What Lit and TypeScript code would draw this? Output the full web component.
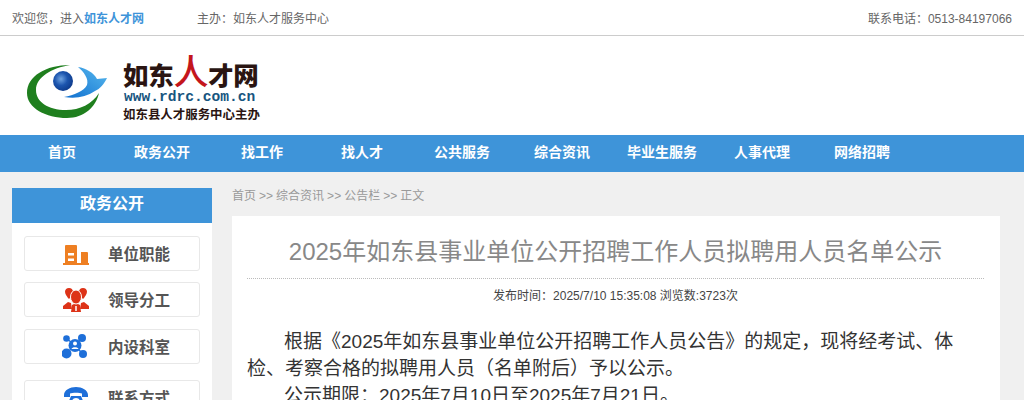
import { LitElement, html, css, svg } from "lit";
import { customElement } from "lit/decorators.js";

const nav = ["首页", "政务公开", "找工作", "找人才", "公共服务", "综合资讯", "毕业生服务", "人事代理", "网络招聘"];

const icons = {
  building: svg`<svg width="26" height="23" viewBox="0 -3 26 23"><path fill="#ee7f22" d="M2 1a1 1 0 0 1 1-1h10a1 1 0 0 1 1 1v18H2z"/><path fill="#ee7f22" d="M18 7h6a1 1 0 0 1 1 1v11h-7z"/><rect x="0" y="18" width="26" height="2" fill="#ee7f22"/><rect x="5" y="8" width="6" height="2.500" fill="#fff"/><rect x="5" y="13.500" width="6" height="2.500" fill="#fff"/></svg>`,
  people: svg`<svg width="26" height="24" viewBox="0 0 26 24"><g fill="#dd3318"><path d="M6 0c2.400 0 4 1.700 4 3.700 0 2.800-2.500 4.800-3.200 6.800h-1.600C4.500 8.500 2 6.500 2 3.700 2 1.700 3.600 0 6 0z"/><path d="M20 0c2.400 0 4 1.700 4 3.700 0 2.800-2.500 4.800-3.200 6.800h-1.600C18.500 8.500 16 6.500 16 3.700 16 1.700 17.600 0 20 0z"/><path d="M0 18l5-4 3 1 1 6H0z"/><path d="M26 18l-5-4-3 1-1 6h9z"/><path d="M8 24l1-7 4-2 4 2 1 7z"/></g><ellipse cx="13" cy="9" rx="5.500" ry="7" fill="#dd3318" stroke="#fff" stroke-width="1"/><path d="M13 18v5" stroke="#fff" stroke-width="1.500"/></svg>`,
  net: svg`<svg width="28" height="25" viewBox="0 0 28 25"><g stroke="#1e6fd9" stroke-width="1.500"><path d="M5 5l8 6M20 4l-7 7M4 19l9-7M21 20l-8-8"/></g><g fill="#1e6fd9"><circle cx="4.500" cy="4.500" r="3.300"/><circle cx="20" cy="4" r="4"/><circle cx="4.500" cy="19.500" r="5"/><circle cx="21" cy="20" r="4"/><circle cx="13" cy="11.500" r="6.500"/></g><circle cx="13" cy="9.500" r="2" fill="#fff"/><path d="M9.500 15c.5-2.500 6.500-2.500 7 0z" fill="#fff"/></svg>`,
  phone: svg`<svg width="24" height="26" viewBox="0 -2 24 26"><path fill="#1e6fd9" d="M0 8C0 3 6 0 12 0s12 3 12 8v2h-6V6.500C16 5.500 8 5.500 6 6.500V10H0z"/><path fill="#1e6fd9" d="M7 9h10l5 12v3H2v-3z"/><circle cx="12" cy="15" r="4" fill="#fff"/><circle cx="12" cy="15" r="2" fill="#1e6fd9"/></svg>`,
};

const side = [
  { t: "单位职能", i: icons.building, c: "" },
  { t: "领导分工", i: icons.people, c: "" },
  { t: "内设科室", i: icons.net, c: "wide" },
  { t: "联系方式", i: icons.phone, c: "" },
];

@customElement("app-root")
export class AppRoot extends LitElement {
  static styles = css`
    :host { display: block; height: 400px; overflow: hidden; background: #f0f0f0; font-family: "Liberation Sans", "Noto Sans CJK SC", sans-serif; }
    .top { height: 35px; background: #fff; border-bottom: 1px solid #ccc; display: flex; align-items: center; padding: 0 12px; font-size: 12px; color: #666; }
    .top b { color: #3e94d9; }
    .host { margin-left: 53px; }
    .phone { margin-left: auto; }
    .brand { height: 99px; background: #fff; display: flex; align-items: flex-start; padding-left: 26px; }
    .mark { display: block; margin-right: 15px; margin-top: 28px; }
    .words { display: flex; flex-direction: column; width: 140px; margin-top: 22px; }
    .name { font-size: 25.500px; line-height: 27px; font-weight: 900; color: #2a1512; height: 32px; display: flex; align-items: flex-end; white-space: nowrap; letter-spacing: -0.300px; }
    .name i { font-style: normal; font-size: 35px; line-height: 34px; font-weight: 500; color: #c4161c; }
    .url { font-family: "Liberation Mono", monospace; font-size: 14.600px; line-height: 15px; font-weight: 700; color: #17557f; white-space: nowrap; padding-left: 1px; }
    .sub { font-size: 12.450px; line-height: 20px; font-weight: 700; color: #2a1512; white-space: nowrap; }
    nav { height: 37px; background: #3e94d9; display: flex; padding: 0 12px; }
    nav a { width: 100px; text-align: center; line-height: 35px; font-size: 14px; font-weight: 700; color: #fff; }
    .body { display: flex; gap: 20px; padding: 16px 24px 0 12px; }
    aside { width: 200px; flex: none; background: #fff; }
    aside h3 { margin: 0; height: 35px; line-height: 31px; background: #3e94d9; color: #fff; font-size: 16px; font-weight: 700; text-align: center; }
    .list { display: flex; flex-direction: column; padding: 13px 12px; gap: 11px; }
    .item { height: 35px; box-sizing: border-box; border: 1px solid #e8e8e8; border-radius: 3px; display: flex; align-items: center; font-size: 15.500px; font-weight: 700; color: #555; flex: none; }
    .item.wide { margin-bottom: 5px; margin-top: 1px; }
    .ic { width: 83px; display: flex; justify-content: center; padding-left: 19px; box-sizing: border-box; }
    .lb { margin-top: -2px; }
    main { flex: 1; min-width: 0; }
    .crumb { height: 28px; padding-top: 1px; box-sizing: border-box; font-size: 12px; line-height: 14px; color: #999; word-spacing: -0.300px; }
    .card { background: #fff; padding: 0 16px 0 15px; height: 300px; }
    h1 { margin: 0; height: 63px; box-sizing: border-box; border-bottom: 1px dotted #bbb; font-size: 24px; font-weight: 400; line-height: 72px; color: #888; text-align: center; white-space: nowrap; }
    .meta { font-size: 12px; line-height: 16px; color: #444; text-align: center; padding-top: 9px; height: 40px; }
    .text { font-size: 19px; line-height: 27px; color: #333; }
    .text p { margin: 0; text-indent: 37px; }
  `;

  render() {
    return html`
      <div class="top">
        <span>欢迎您，进入<b>如东人才网</b></span>
        <span class="host">主办：如东人才服务中心</span>
        <span class="phone">联系电话：0513-84197066</span>
      </div>
      <div class="brand">
        <svg class="mark" width="82" height="56" viewBox="0 0 82 56">
          <defs>
            <radialGradient id="g" cx="0.400" cy="0.400" r="0.650"><stop offset="0" stop-color="#6fa3e0"/><stop offset="0.500" stop-color="#1c55ae"/><stop offset="1" stop-color="#0d3a8a"/></radialGradient>
            <linearGradient id="b" x1="0" y1="1" x2="1" y2="0"><stop offset="0" stop-color="#0f6fcf"/><stop offset="1" stop-color="#58b9ee"/></linearGradient>
          </defs>
          <path fill="#1f7f1e" d="M44 1C20 1 1 12 1 29c0 15 19 25 40 25 17 0 29-11 32-25-7 11-19 17-33 17C22 46 10 38 10 26 10 13 26 4 44 1z"/>
          <circle cx="37" cy="17" r="10" fill="url(#g)"/>
          <path fill="url(#b)" d="M52 3c8 1 16 6 19 12 3 0 7-1 10-1-3 6-7 11-12 13-9 6-19 8-31 6 10-2 20-6 23-12 2-6-3-13-9-18z"/>
        </svg>
        <div class="words">
          <div class="name">如东<i>人</i>才网</div>
          <div class="url">www.rdrc.com.cn</div>
          <div class="sub">如东县人才服务中心主办</div>
        </div>
      </div>
      <nav>${nav.map((n) => html`<a>${n}</a>`)}</nav>
      <div class="body">
        <aside>
          <h3>政务公开</h3>
          <div class="list">
            ${side.map((s) => html`<div class="item ${s.c}"><span class="ic">${s.i}</span><span class="lb">${s.t}</span></div>`)}
          </div>
        </aside>
        <main>
          <div class="crumb">首页 &gt;&gt; 综合资讯 &gt;&gt; 公告栏 &gt;&gt; 正文</div>
          <div class="card">
            <h1>2025年如东县事业单位公开招聘工作人员拟聘用人员名单公示</h1>
            <div class="meta">发布时间：2025/7/10 15:35:08 浏览数:3723次</div>
            <div class="text">
              <p>根据《2025年如东县事业单位公开招聘工作人员公告》的规定，现将经考试、体检、考察合格的拟聘用人员（名单附后）予以公示。</p>
              <p>公示期限：2025年7月10日至2025年7月21日。</p>
            </div>
          </div>
        </main>
      </div>
    `;
  }
}
